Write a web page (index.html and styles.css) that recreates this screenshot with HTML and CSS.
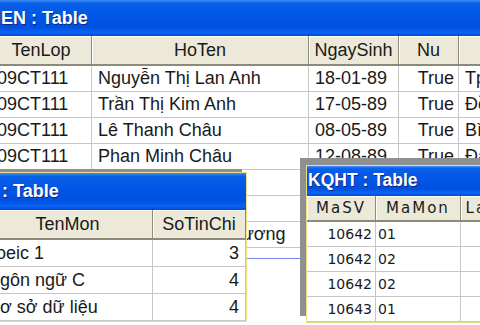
FILE: index.html
```html
<!DOCTYPE html>
<html>

<head>
    <meta charset="utf-8">
    <title>Access - Tables</title>
    <link rel="stylesheet" href="styles.css">
</head>

<body>
    <div class="desk">

        <!-- SINHVIEN -->
        <div class="win" id="sinhvien">
            <div class="title">SINHVIEN : Table</div>
            <table class="sheet">
                <colgroup>
                    <col class="sv-masv">
                    <col class="sv-tenlop">
                    <col class="sv-hoten">
                    <col class="sv-ngaysinh">
                    <col class="sv-nu">
                    <col class="sv-que">
                </colgroup>
                <tr>
                    <th>MaSV</th>
                    <th>TenLop</th>
                    <th>HoTen</th>
                    <th>NgaySinh</th>
                    <th>Nu</th>
                    <th>QueQuan</th>
                </tr>
                <tr>
                    <td class="num">10640</td>
                    <td>09CT111</td>
                    <td>Nguyễn Thị Lan Anh</td>
                    <td>18-01-89</td>
                    <td class="num">True</td>
                    <td>Tp. Huế</td>
                </tr>
                <tr>
                    <td class="num">10641</td>
                    <td>09CT111</td>
                    <td>Trần Thị Kim Anh</td>
                    <td>17-05-89</td>
                    <td class="num">True</td>
                    <td>Đồng Hới</td>
                </tr>
                <tr>
                    <td class="num">10642</td>
                    <td>09CT111</td>
                    <td>Lê Thanh Châu</td>
                    <td>08-05-89</td>
                    <td class="num">True</td>
                    <td>Bình Định</td>
                </tr>
                <tr>
                    <td class="num">10643</td>
                    <td>09CT111</td>
                    <td>Phan Minh Châu</td>
                    <td>12-08-89</td>
                    <td class="num">True</td>
                    <td>Đà Nẵng</td>
                </tr>
                <tr>
                    <td class="num">10644</td>
                    <td>09CT111</td>
                    <td>Trần Thị Ngọc Mai</td>
                    <td>21-03-89</td>
                    <td class="num">True</td>
                    <td>Quảng Nam</td>
                </tr>
                <tr>
                    <td class="num">10645</td>
                    <td>09CT111</td>
                    <td>Nguyễn Thanh Hải</td>
                    <td>02-11-89</td>
                    <td class="num">False</td>
                    <td>Đà Nẵng</td>
                </tr>
                <tr>
                    <td class="num">10646</td>
                    <td>09CT111</td>
                    <td>Nguyễn Thị Mai Hương</td>
                    <td>15-07-89</td>
                    <td class="num">True</td>
                    <td>Quảng Ngãi</td>
                </tr>
            </table>
            <div class="sheet-end"></div>
        </div>

        <!-- MONHOC -->
        <div class="win" id="monhoc">
            <div class="title">MONHOC : Table</div>
            <table class="sheet">
                <colgroup>
                    <col class="mh-mamon">
                    <col class="mh-tenmon">
                    <col class="mh-sotc">
                </colgroup>
                <tr>
                    <th>MaMon</th>
                    <th>TenMon</th>
                    <th>SoTinChi</th>
                </tr>
                <tr>
                    <td>01</td>
                    <td>Toeic 1</td>
                    <td class="num">3</td>
                </tr>
                <tr>
                    <td>02</td>
                    <td>Ngôn ngữ C</td>
                    <td class="num">4</td>
                </tr>
                <tr>
                    <td>03</td>
                    <td>Cơ sở dữ liệu</td>
                    <td class="num">4</td>
                </tr>
            </table>
        </div>

        <!-- KQHT -->
        <div class="win" id="kqht">
            <div class="title">KQHT : Table</div>
            <table class="sheet">
                <colgroup>
                    <col class="kq-masv">
                    <col class="kq-mamon">
                    <col class="kq-lan">
                    <col class="kq-diem">
                </colgroup>
                <tr>
                    <th>MaSV</th>
                    <th>MaMon</th>
                    <th>LanThi</th>
                    <th>Diem</th>
                </tr>
                <tr>
                    <td class="num">10642</td>
                    <td>01</td>
                    <td class="num">1</td>
                    <td class="num">7</td>
                </tr>
                <tr>
                    <td class="num">10642</td>
                    <td>02</td>
                    <td class="num">1</td>
                    <td class="num">4</td>
                </tr>
                <tr>
                    <td class="num">10642</td>
                    <td>02</td>
                    <td class="num">2</td>
                    <td class="num">6</td>
                </tr>
                <tr>
                    <td class="num">10643</td>
                    <td>01</td>
                    <td class="num">1</td>
                    <td class="num">8</td>
                </tr>
            </table>
        </div>

    </div>
</body>

</html>
```

FILE: styles.css
```css
* {
    box-sizing: border-box;
}

body {
    margin: 0;
    background-color: #ffffff;
    font-family: 'Liberation Sans', Arial, sans-serif;
}

.desk {
    position: relative;
    width: 480px;
    height: 325px;
    overflow: hidden;
    background-color: #ffffff;
}

/* windows on the desk */
.win {
    position: absolute;
    background-color: #ffffff;
}

.title {
    color: #ffffff;
    font-weight: bold;
    font-size: 18px;
    white-space: nowrap;
    text-shadow: 1px 1px 0 #0a2a8a;
    background: linear-gradient(to bottom, #3d8df5 0%, #0a5fe8 9%, #0056e6 45%, #0050df 75%, #0a64f2 90%, #0049d2 100%);
}

/* datasheet */
.sheet {
    border-collapse: separate;
    border-spacing: 0;
    table-layout: fixed;
    font-size: 18px;
    color: #1a1a1a;
}

.sheet th {
    font-weight: 400;
    background-color: #ece9d8;
    border-right: 1px solid #8d8a7b;
    border-bottom: 2px solid #8d8a7b;
    box-shadow: inset 1px 1px 0 #ffffff;
    padding: 0 4px;
    text-align: center;
    white-space: nowrap;
    overflow: hidden;
}

.sheet td {
    border-right: 1px solid #c6c6c6;
    border-bottom: 1px solid #c6c6c6;
    padding: 0 6px;
    white-space: nowrap;
    overflow: hidden;
}

.sheet td.num {
    text-align: right;
    padding-right: 4px;
}

/* SINHVIEN */
#sinhvien {
    left: -66px;
    top: 0;
    width: 714px;
}

#sinhvien .title {
    height: 36px;
    line-height: 36px;
    padding-left: 7px;
}

#sinhvien .sheet {
    width: 714px;
}

#sinhvien tr {
    height: 26px;
}

#sinhvien tr:first-child {
    height: 30px;
}

.sv-masv { width: 57px; }
.sv-tenlop { width: 101px; }
.sv-hoten { width: 217px; }
.sv-ngaysinh { width: 90px; }
.sv-nu { width: 60px; }
.sv-que { width: 189px; }

.sheet-end {
    margin-top: 10px;
    border-top: 1px solid #7585f0;
}

/* MONHOC */
#monhoc {
    left: -92px;
    top: 172px;
    width: 339px;
    border: 1px solid #ecdf8a;
    box-shadow: -5px -3px 0 #8f8f8f;
}

#monhoc .title {
    height: 37px;
    line-height: 37px;
    padding-left: 6px;
}

#monhoc .sheet {
    width: 337px;
}

#monhoc tr {
    height: 27px;
}

#monhoc tr:first-child {
    height: 30px;
}

#monhoc td {
    padding-left: 4px;
}

#monhoc td.num {
    padding-right: 6px;
}

.mh-mamon { width: 74px; }
.mh-tenmon { width: 170px; }
.mh-sotc { width: 93px; }

/* KQHT */
#kqht {
    left: 306px;
    top: 165px;
    width: 320px;
    border: 1px solid #ecdf8a;
    box-shadow: -6px -7px 0 #8f8f8f;
}

#kqht .title {
    height: 30px;
    line-height: 28px;
    padding-left: 1px;
    font-size: 17.5px;
}

#kqht .sheet {
    width: 318px;
    font-family: 'DejaVu Sans', sans-serif;
    font-size: 14px;
}

#kqht th {
    font-size: 15px;
    letter-spacing: 2px;
}

#kqht tr {
    height: 25px;
}

#kqht tr:first-child {
    height: 26px;
}

#kqht td {
    padding-left: 2px;
}

#kqht td.num {
    padding-right: 3px;
}

.kq-masv { width: 69px; }
.kq-mamon { width: 85px; }
.kq-lan { width: 72px; }
.kq-diem { width: 92px; }
```
